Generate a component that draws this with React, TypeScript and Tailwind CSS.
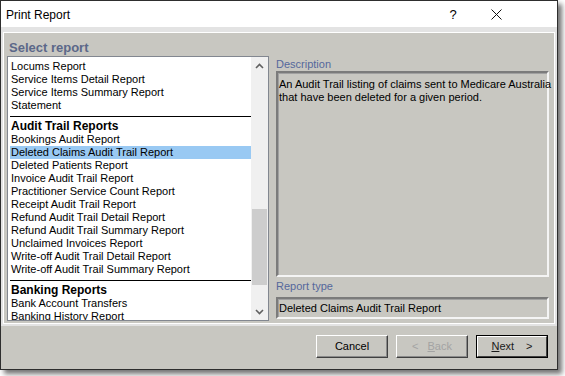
import React from 'react';

const groups: { header?: string; items: string[] }[] = [
    { items: ['Locums Report', 'Service Items Detail Report', 'Service Items Summary Report', 'Statement'] },
    {
        header: 'Audit Trail Reports',
        items: [
            'Bookings Audit Report',
            'Deleted Claims Audit Trail Report',
            'Deleted Patients Report',
            'Invoice Audit Trail Report',
            'Practitioner Service Count Report',
            'Receipt Audit Trail Report',
            'Refund Audit Trail Detail Report',
            'Refund Audit Trail Summary Report',
            'Unclaimed Invoices Report',
            'Write-off Audit Trail Detail Report',
            'Write-off Audit Trail Summary Report',
        ],
    },
    { header: 'Banking Reports', items: ['Bank Account Transfers', 'Banking History Report'] },
];

const selected = 'Deleted Claims Audit Trail Report';

const Chevron = ({ down }: { down?: boolean }) => (
    <svg width="9" height="6" viewBox="0 0 9 6" className={down ? 'rotate-180' : ''}>
        <path d="M1 5 L4.5 1.5 L8 5" fill="none" stroke="#606060" strokeWidth="1.6" />
    </svg>
);

const App = () => {
    return (
        <div className="w-[565px] h-[376px] bg-white font-['Liberation_Sans',Arial,sans-serif] text-black">
            <div className="w-[558px] h-[370px] border border-[#2e2e2e] bg-[#c8c7c1] flex flex-col shadow-[4px_4px_5px_rgba(0,0,0,0.55)]">
                {/* Title bar */}
                <div className="h-[26px] bg-white flex items-center pl-[5px] pt-[1px] text-[12px] shrink-0">
                    <span className="flex-1">Print Report</span>
                    <span className="w-[20px] text-center text-[13px] mr-[28px]">?</span>
                    <svg width="11" height="11" viewBox="0 0 11 11" className="mr-[55px]">
                        <path d="M0.5 0.5 L10.5 10.5 M10.5 0.5 L0.5 10.5" stroke="#111" strokeWidth="1" />
                    </svg>
                </div>

                {/* Main panel */}
                <div className="bg-[#e3e3e3] pt-[5px] px-[2px] pb-[2px] shrink-0">
                    <div className="border border-white bg-[#c8c7c1] pb-[2px]">
                        <div className="h-[23px] pl-[5px] pt-[7px] text-[13px] leading-[16px] font-bold text-[#5b6889]">
                            Select report
                        </div>
                        <div className="flex pl-[3px]">
                            {/* Report list */}
                            <div className="w-[262px] h-[265px] border border-[#828790] bg-white flex text-[11px]">
                                <div className="flex-1 overflow-hidden pt-[3px] pl-[2px]">
                                    {groups.map((g, gi) => (
                                        <div key={gi}>
                                            {g.header && (
                                                <>
                                                    <div className="h-[1px] bg-black mt-[4px] mb-[3px]" />
                                                    <div className="h-[13px] leading-[13px] pl-[1px] font-bold text-[12px]">{g.header}</div>
                                                </>
                                            )}
                                            {g.items.map((it) => (
                                                <div
                                                    key={it}
                                                    className={`h-[13px] leading-[13px] pl-[1px] whitespace-nowrap ${it === selected ? 'bg-[#99c9f3]' : ''}`}
                                                >
                                                    {it}
                                                </div>
                                            ))}
                                        </div>
                                    ))}
                                </div>
                                {/* Scrollbar */}
                                <div className="w-[17px] bg-[#f0f0f0] flex flex-col">
                                    <div className="h-[17px] flex items-center justify-center">
                                        <Chevron />
                                    </div>
                                    <div className="h-[135px]" />
                                    <div className="h-[76px] mx-[1px] bg-[#cdcdcd]" />
                                    <div className="flex-1" />
                                    <div className="h-[17px] flex items-center justify-center">
                                        <Chevron down />
                                    </div>
                                </div>
                            </div>

                            {/* Right column */}
                            <div className="ml-[7px] w-[273px] flex flex-col text-[11px]">
                                <div className="h-[15px] pt-[2px] leading-[13px] text-[#55679c]">Description</div>
                                <div className="h-[206px] border-2 border-t-[#7b7b7b] border-l-[#7b7b7b] border-b-[#f4f4f4] border-r-[#f4f4f4] shadow-[inset_1px_1px_0_#a0a0a0] pt-[5px] pl-[1px] leading-[13px] whitespace-nowrap">
                                    An Audit Trail listing of claims sent to Medicare Australia
                                    <br />
                                    that have been deleted for a given period.
                                </div>
                                <div className="h-[20px] leading-[19px] text-[#55679c]">Report type</div>
                                <div className="h-[22px] border-2 border-t-[#7b7b7b] border-l-[#7b7b7b] border-b-[#f4f4f4] border-r-[#f4f4f4] shadow-[inset_1px_1px_0_#a0a0a0] pl-[1px] flex items-center">
                                    Deleted Claims Audit Trail Report
                                </div>
                            </div>
                        </div>
                    </div>
                </div>

                {/* Buttons */}
                <div className="flex-1 flex justify-end items-start gap-[8px] pt-[9px] pr-[9px] text-[11px]">
                    <button className="w-[72px] h-[23px] border border-t-white border-l-white border-b-[#404040] border-r-[#404040] shadow-[inset_-1px_-1px_0_#8a8a8a] flex items-center justify-center">
                        Cancel
                    </button>
                    <button className="w-[72px] h-[23px] border border-t-white border-l-white border-b-[#404040] border-r-[#404040] shadow-[inset_-1px_-1px_0_#8a8a8a] flex items-center justify-center gap-[9px] text-[#a3a3a3]">
                        <span>&lt;</span>
                        <span>
                            <span className="underline">B</span>ack
                        </span>
                    </button>
                    <div className="w-[72px] h-[23px] border border-black">
                        <button className="w-full h-full border border-t-white border-l-white border-b-[#404040] border-r-[#404040] flex items-center justify-center gap-[12px] text-[#1a1a1a]">
                            <span>
                                <span className="underline">N</span>ext
                            </span>
                            <span>&gt;</span>
                        </button>
                    </div>
                </div>
            </div>
        </div>
    );
};

export default App;
